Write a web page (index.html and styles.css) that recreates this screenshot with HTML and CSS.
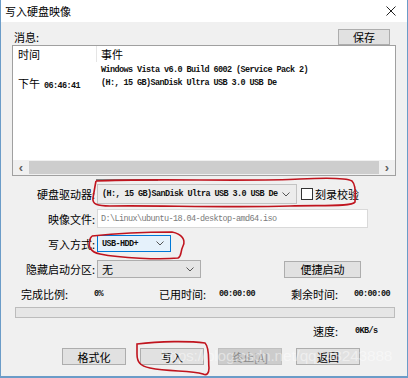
FILE: index.html
```html
<!DOCTYPE html>
<html>
<head>
<meta charset="utf-8">
<link rel="stylesheet" href="styles.css">
</head>
<body>
<div class="window">
  <div class="titlebar">
    <span class="title">写入硬盘映像</span>
    <svg class="close" width="10" height="10" viewBox="0 0 10 10"><path d="M0.5 0.5L9.5 9.5M9.5 0.5L0.5 9.5" stroke="#222" stroke-width="1"/></svg>
  </div>
  <div class="body">
    <div class="msg-head">
      <span class="cn">消息:</span>
      <div class="btn save">保存</div>
    </div>
    <div class="listbox">
      <div class="lhead">
        <div class="c1 cn">时间</div>
        <div class="c2 cn">事件</div>
      </div>
      <div class="lrow"><div class="c1"></div><div class="c2 mono">Windows Vista v6.0 Build 6002 (Service Pack 2)</div></div>
      <div class="lrow"><div class="c1"><span class="cn">下午</span> <span class="mono">06:46:41</span></div><div class="c2 mono">(H:, 15 GB)SanDisk Ultra USB 3.0 USB De</div></div>
      <div class="lfill"></div>
      <div class="hscroll">
        <span class="arr">&lsaquo;</span>
        <div class="thumb"></div>
        <span class="arr">&rsaquo;</span>
      </div>
    </div>

    <div class="frow r-drive">
      <div class="label cn">硬盘驱动器:</div>
      <div class="combo drive"><span class="mono">(H:, 15 GB)SanDisk Ultra USB 3.0 USB De</span><svg class="chev" width="8" height="5" viewBox="0 0 8 5"><path d="M0.5 0.5L4 4L7.5 0.5" fill="none" stroke="#555"/></svg></div>
      <div class="check"></div>
      <span class="cn chklabel">刻录校验</span>
    </div>
    <div class="frow r-file">
      <div class="label cn">映像文件:</div>
      <div class="input mono">D:\Linux\ubuntu-18.04-desktop-amd64.iso</div>
    </div>
    <div class="frow r-mode">
      <div class="label cn">写入方式:</div>
      <div class="combo mode"><span class="mono">USB-HDD+</span><svg class="chev" width="8" height="5" viewBox="0 0 8 5"><path d="M0.5 0.5L4 4L7.5 0.5" fill="none" stroke="#555"/></svg></div>
    </div>
    <div class="frow r-hide">
      <div class="label cn">隐藏启动分区:</div>
      <div class="combo hide"><span class="cn">无</span><svg class="chev" width="8" height="5" viewBox="0 0 8 5"><path d="M0.5 0.5L4 4L7.5 0.5" fill="none" stroke="#555"/></svg></div>
      <div class="btn quick">便捷启动</div>
    </div>

    <div class="stats">
      <span class="cn s1">完成比例:</span><span class="mono s2">0%</span>
      <span class="cn s3">已用时间:</span><span class="mono s4">00:00:00</span>
      <span class="cn s5">剩余时间:</span><span class="mono s6">00:00:00</span>
    </div>
    <div class="progress"></div>
    <div class="speed"><span class="cn">速度:</span><span class="mono sp">0KB/s</span></div>
    <div class="buttons">
      <div class="btn">格式化</div>
      <div class="btn">写入</div>
      <div class="btn disabled">终止[A]</div>
      <div class="btn">返回</div>
    </div>
  </div>
  <div class="watermark">https://blog.csdn.net/qq_43243888</div>
  <svg class="marks" width="408" height="378" viewBox="0 0 408 378">
    <path d="M96 180 L158 180" stroke="#111" stroke-width="1.2" fill="none"/>
    <path d="M96 181 C150 178 250 182 300 179 C320 178 345 177 352 181 C357 186 355 196 355 202 C352 207 320 205 290 206 C230 208 150 205 110 206 C97 206 92 204 93 198 C94 192 95 186 96 181" stroke="#c0141e" stroke-width="1.6" fill="none"/>
    <path d="M92 236 C120 233 150 232 172 232 C182 234 186 240 183 246 C180 252 182 256 178 258 C160 260 120 258 100 254 C90 252 88 246 90 240 C90 238 92 236 92 236" stroke="#c0141e" stroke-width="1.6" fill="none"/>
    <path d="M137 344 C160 341 190 341 205 343 C210 348 208 360 209 368 C209 373 207 376 203 374 C190 370 170 372 150 368 C140 366 137 362 137 354 Z" stroke="#c0141e" stroke-width="1.6" fill="none"/>
  </svg>
</div>
</body>
</html>
```
FILE: styles.css
```css
* { box-sizing: border-box; }
html, body { margin: 0; padding: 0; }
body { width: 408px; height: 378px; overflow: hidden; background: #f0f0f0; }
.cn { font-family: "Noto Sans CJK SC", "Microsoft YaHei", sans-serif; font-size: 11px; color: #000; }
.mono { font-family: "Liberation Mono", monospace; font-size: 8.5px; font-weight: bold; letter-spacing: -0.6px; color: #111; }
.window {
  position: relative;
  width: 408px; height: 378px;
  border-left: 1px solid #6b9cc8;
  border-right: 1px solid #6b9cc8;
  border-bottom: 2px solid #6b9cc8;
  background: #f0f0f0;
  display: flex; flex-direction: column;
}
.titlebar {
  height: 22px; background: #fff;
  display: flex; align-items: center; justify-content: space-between;
  padding: 0 10px 0 4px;
}
.title { font-family: "Noto Sans CJK SC", sans-serif; font-size: 11px; color: #000; }
.close { margin-right: 1px; }
.body { flex: 1; padding: 6px 11px 0 11px; display: flex; flex-direction: column; }
.msg-head { height: 17px; display: flex; align-items: center; justify-content: space-between; padding-left: 2px; }
.btn {
  background: #e1e1e1; border: 1px solid #adadad;
  font-family: "Noto Sans CJK SC", sans-serif; font-size: 11px; color: #000;
  display: flex; align-items: center; justify-content: center;
}
.save { width: 52px; height: 16px; margin-right: 6px; }
.listbox {
  margin-top: 0; height: 131px; background: #fff; border: 1px solid #a0a0a0;
  display: flex; flex-direction: column;
}
.lhead { height: 16px; display: flex; align-items: center; }
.lhead .c1 { border-right: 1px solid #e5e5e5; height: 16px; line-height: 16px; }
.c1 { width: 84px; padding-left: 5px; flex: none; }
.c2 { padding-left: 4px; }
.lrow { height: 13px; display: flex; align-items: center; }
.lrow:nth-of-type(2) { margin-top: 1px; }
.lfill { flex: 1; }
.hscroll { height: 15px; background: #f0f0f0; display: flex; align-items: center; padding: 0 3px; }
.arr { font-family: "Liberation Sans", sans-serif; font-size: 13px; font-weight: bold; color: #606060; width: 10px; text-align: center; line-height: 15px; }
.thumb { flex: 1; height: 13px; background: #cdcdcd; margin: 0 3px; }
.frow { display: flex; align-items: center; }
.label { width: 84px; text-align: right; padding-right: 1px; flex: none; }
.r-drive { height: 20px; margin-top: 8px; }
.r-file { height: 19px; margin-top: 5px; }
.r-mode { height: 17px; margin-top: 7px; }
.r-hide { height: 18px; margin-top: 8px; }
.combo {
  height: 100%; border: 1px solid #adadad; background: #e5e5e5;
  display: flex; align-items: center; justify-content: space-between; padding: 0 6px 0 4px;
  margin-left: 1px;
}
.drive { width: 200px; background: #ececec; border-color: #c3c3c3; }
.mode { width: 74px; background: #e5f1fb; border-color: #0078d7; }
.hide { width: 104px; }
.hide .cn { font-size: 11px; }
.check { width: 12px; height: 12px; border: 1px solid #333; background: #fff; margin-left: 4px; }
.chklabel { margin-left: 2px; }
.input {
  width: 271px; height: 100%; margin-left: 1px; background: #fff; border: 1px solid #d9d9d9;
  display: flex; align-items: center; padding-left: 3px; color: #7a7a7a; font-weight: normal;
}
.quick { width: 77px; height: 17px; margin-left: 83px; }
.stats { height: 14px; margin-top: 9px; display: flex; align-items: center; position: relative; }
.stats span { position: absolute; top: 0; line-height: 14px; }
.s1 { left: 9px; }
.s2 { left: 82px; }
.s3 { left: 147px; }
.s4 { left: 207px; }
.s5 { left: 279px; }
.s6 { left: 342px; }
.progress { height: 11px; margin-top: 6px; margin-left: 3px; margin-right: 1px; background: #e6e6e6; border: 1px solid #bcbcbc; }
.speed { height: 14px; margin-top: 6px; display: flex; align-items: center; padding-left: 301px; }
.sp { margin-left: 17px; }
.buttons { margin-top: 10px; display: flex; gap: 14px; padding-left: 50px; }
.buttons .btn { width: 64px; height: 17px; }
.btn.disabled { background: #cccccc; border-color: #bfbfbf; color: #8a8a8a; }
.watermark {
  position: absolute; left: 160px; top: 347px;
  font-family: "Liberation Sans", sans-serif; font-size: 15.5px; color: rgba(255,255,255,0.45);
  letter-spacing: -0.2px; white-space: nowrap;
}
.marks { position: absolute; left: -1px; top: 0; pointer-events: none; }
```
